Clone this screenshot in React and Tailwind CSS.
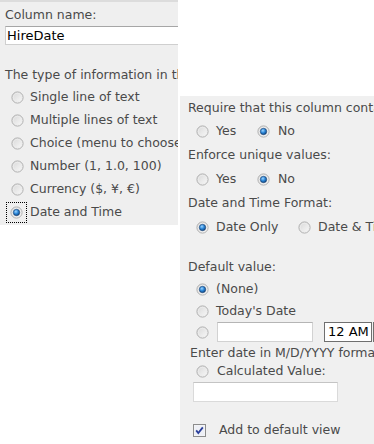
import React from 'react';

const Radio = ({ checked = false }) => (
  <svg width="13" height="13" viewBox="0 0 13 13" className="shrink-0">
    <defs>
      <linearGradient id={checked ? 'rgc' : 'rgu'} x1="0" y1="0" x2="1" y2="1">
        <stop offset="0" stopColor="#d6d6d6" />
        <stop offset="1" stopColor="#fbfbfb" />
      </linearGradient>
      <radialGradient id="dot" cx="0.4" cy="0.35" r="0.7">
        <stop offset="0" stopColor="#9fd6ff" />
        <stop offset="0.5" stopColor="#2a86d8" />
        <stop offset="1" stopColor="#0a3f7a" />
      </radialGradient>
    </defs>
    <circle cx="6.5" cy="6.5" r="5.6" fill={`url(#${checked ? 'rgc' : 'rgu'})`} stroke="#b0b0b0" strokeWidth="1" />
    <circle cx="6.5" cy="6.5" r="4.2" fill="none" stroke="#ececec" strokeWidth="0.8" />
    {checked && <circle cx="6.5" cy="6.5" r="3.2" fill="url(#dot)" stroke="#1d3f6e" strokeWidth="0.6" />}
  </svg>
);

const Checkbox = () => (
  <svg width="13" height="13" viewBox="0 0 13 13" className="shrink-0">
    <rect x="0.5" y="0.5" width="12" height="12" fill="#f7f7f7" stroke="#8c8c8c" />
    <rect x="1.5" y="1.5" width="10" height="10" fill="#eef0f6" />
    <path d="M3.2 6.4 L5.3 9 L9.8 3.4" fill="none" stroke="#2a3f9a" strokeWidth="1.8" />
  </svg>
);

const font = { fontFamily: '"DejaVu Sans", Verdana, sans-serif' };

export default function App() {
  return (
    <div className="w-[374px] h-[444px] bg-white overflow-hidden flex text-[12.5px] text-[#4a4a4a]" style={font}>
      {/* Left panel: column name + type */}
      <div className="w-[178px] h-[225px] shrink-0 bg-[#efefef] border-t-2 border-[#dcdcdc] overflow-hidden flex flex-col">
        <div className="mt-[5px] pl-[5px] leading-[16px] whitespace-nowrap">Column name:</div>
        <div className="mt-[3px] ml-[5px] w-[220px] h-[19px] bg-white border border-[#cfcfcf] border-t-[#a6a6a6] pl-[1px] leading-[17px] text-[13px] text-black shrink-0">
          HireDate
        </div>
        <div className="mt-[22px] pl-[5px] leading-[16px] whitespace-nowrap">The type of information in this column is:</div>
        <div className="mt-[3px] flex flex-col">
          {['Single line of text', 'Multiple lines of text', 'Choice (menu to choose from)', 'Number (1, 1.0, 100)', 'Currency ($, ¥, €)'].map((t) => (
            <div key={t} className="h-[23px] flex items-center pl-[11px] gap-[6px] whitespace-nowrap">
              <Radio />
              <span>{t}</span>
            </div>
          ))}
          <div className="h-[23px] flex items-center pl-[6px] gap-[3px] whitespace-nowrap">
            <span className="w-[21px] h-[21px] shrink-0 border border-dotted border-black flex items-center justify-center">
              <Radio checked />
            </span>
            <span>Date and Time</span>
          </div>
        </div>
      </div>

      {/* Right panel: additional settings */}
      <div className="ml-[2px] mt-[96px] w-[194px] h-[348px] shrink-0 bg-[#f0f0f0] flex flex-col whitespace-nowrap overflow-hidden">
        <div className="h-[24px] flex items-center pl-[8px]">Require that this column contains information:</div>
        <div className="h-[22px] flex items-center pl-[16px]">
          <div className="w-[61px] shrink-0 flex items-center gap-[7px]"><Radio /><span>Yes</span></div>
          <div className="shrink-0 flex items-center gap-[8px]"><Radio checked /><span>No</span></div>
        </div>
        <div className="h-[26px] flex items-center pl-[8px]">Enforce unique values:</div>
        <div className="h-[22px] flex items-center pl-[16px]">
          <div className="w-[61px] shrink-0 flex items-center gap-[7px]"><Radio /><span>Yes</span></div>
          <div className="shrink-0 flex items-center gap-[8px]"><Radio checked /><span>No</span></div>
        </div>
        <div className="h-[26px] flex items-center pl-[8px]">Date and Time Format:</div>
        <div className="h-[22px] flex items-center pl-[16px]">
          <div className="w-[102px] shrink-0 flex items-center gap-[7px]"><Radio checked /><span>Date Only</span></div>
          <div className="shrink-0 flex items-center gap-[7px]"><Radio /><span>Date &amp; Time</span></div>
        </div>
        <div className="h-[18px]" />
        <div className="h-[22px] flex items-center pl-[8px]">Default value:</div>
        <div className="h-[22px] flex items-center pl-[16px] gap-[7px]"><Radio checked /><span>(None)</span></div>
        <div className="h-[22px] flex items-center pl-[16px] gap-[7px]"><Radio /><span>Today's Date</span></div>
        <div className="h-[20px] flex items-center pl-[16px]">
          <Radio />
          <div className="ml-[8px] w-[96px] h-[20px] shrink-0 bg-white border border-[#d2d2d2] border-t-[#b5b5b5]" />
          <div className="ml-[11px] w-[48px] h-[20px] shrink-0 bg-white border border-[#6f6f6f] text-[13px] text-black leading-[18px] pl-[3px]">12 AM</div>
          <div className="ml-[1px] w-[12px] h-[20px] shrink-0 bg-[#e6e6e6] border border-[#6f6f6f]" />
        </div>
        <div className="h-[22px] flex items-center pl-[10px]">Enter date in M/D/YYYY format.</div>
        <div className="h-[14px] flex items-center pl-[16px] gap-[8px]"><Radio /><span>Calculated Value:</span></div>
        <div className="mt-[4px] ml-[13px] w-[145px] h-[20px] shrink-0 bg-white border border-[#dadada] border-t-[#c4c4c4]" />
        <div className="mt-[19px] h-[18px] flex items-center pl-[13px] gap-[13px]"><Checkbox /><span>Add to default view</span></div>
      </div>
    </div>
  );
}
